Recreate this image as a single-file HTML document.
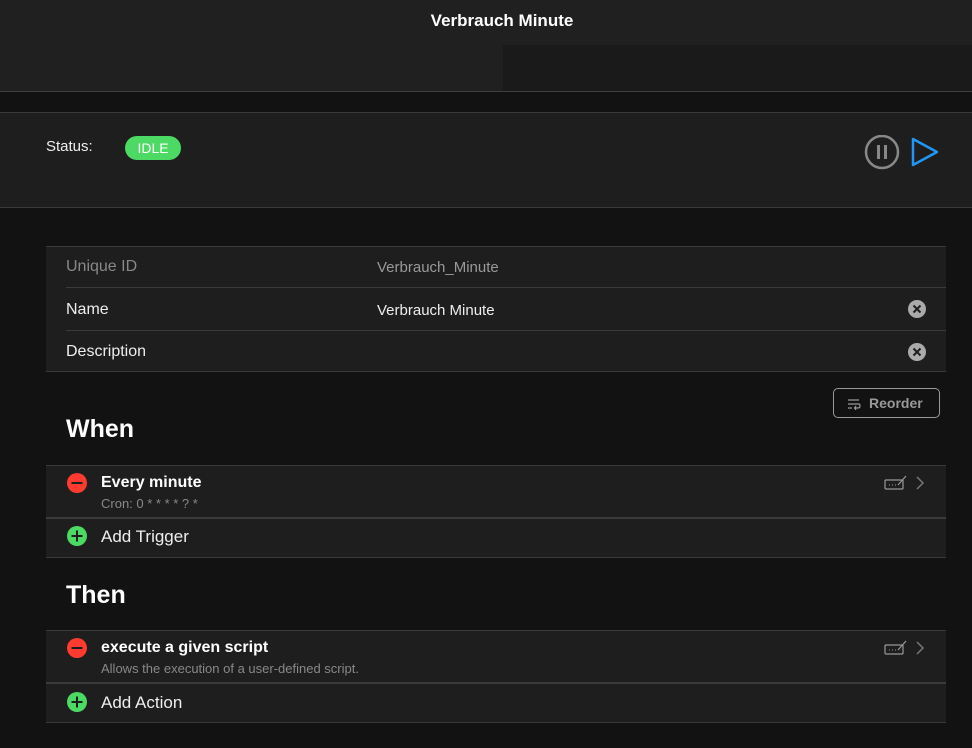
<!DOCTYPE html>
<html><head><style>
*{margin:0;padding:0;box-sizing:border-box}
body{width:972px;height:748px;background:#121212;font-family:"Liberation Sans",sans-serif;color:#fff;position:relative;overflow:hidden}
.a{position:absolute}
.sep{position:absolute;height:1px;background:#3a3a3a}
.t{position:absolute;font-size:16px;white-space:nowrap}
</style></head><body>
<div class="a" style="left:0;top:0;width:972px;height:92px;background:#202020"></div>
<div class="a" style="left:503px;top:45px;width:469px;height:47px;background:#1a1a1a"></div>
<div class="sep" style="left:0;top:91px;width:972px;background:#3f3f3f"></div>
<div class="t" style="left:0;width:1004px;text-align:center;top:11px;font-weight:bold;font-size:17px">Verbrauch Minute</div>

<div class="a" style="left:0;top:112px;width:972px;height:96px;background:#1e1e1e;border-top:1px solid #3a3a3a;border-bottom:1px solid #3a3a3a"></div>
<div class="t" style="left:46px;top:138px;font-size:15px;color:#eee">Status:</div>
<div class="a" style="left:125px;top:136px;width:56px;height:24px;border-radius:12px;background:#4cd964;color:#fff;font-size:14px;text-align:center;line-height:24px">IDLE</div>
<svg class="a" style="left:864px;top:135px" width="36" height="36"><circle cx="18" cy="17" r="16" fill="none" stroke="#888" stroke-width="2.5"/><rect x="13" y="10" width="3" height="14" fill="#888"/><rect x="20" y="10" width="3" height="14" fill="#888"/></svg>
<svg class="a" style="left:910px;top:136px" width="32" height="32"><path d="M3 3 L27 16 L3 29 Z" fill="none" stroke="#2196f3" stroke-width="2.5" stroke-linejoin="round"/></svg>

<div class="a" style="left:46px;top:246px;width:900px;height:126px;background:#1e1e1e;border-top:1px solid #3a3a3a;border-bottom:1px solid #3a3a3a"></div>
<div class="sep" style="left:66px;top:287px;width:880px"></div>
<div class="sep" style="left:66px;top:330px;width:880px"></div>
<div class="t" style="left:66px;top:258px;color:#888">Unique ID</div>
<div class="t" style="left:377px;top:259px;color:#999;font-size:15px">Verbrauch_Minute</div>
<div class="t" style="left:66px;top:301px;color:#eee">Name</div>
<div class="t" style="left:377px;top:302px;color:#eee;font-size:15px">Verbrauch Minute</div>
<div class="t" style="left:66px;top:343px;color:#eee">Description</div>
<svg class="a" style="left:908px;top:300px" width="18" height="18"><circle cx="9" cy="9" r="9" fill="#aaa"/><path d="M5.5 5.5L12.5 12.5M12.5 5.5L5.5 12.5" stroke="#1e1e1e" stroke-width="2"/></svg>
<svg class="a" style="left:908px;top:343px" width="18" height="18"><circle cx="9" cy="9" r="9" fill="#aaa"/><path d="M5.5 5.5L12.5 12.5M12.5 5.5L5.5 12.5" stroke="#1e1e1e" stroke-width="2"/></svg>

<div class="a" style="left:833px;top:388px;width:107px;height:30px;border:1px solid #999;border-radius:5px"></div>
<svg class="a" style="left:847px;top:398px" width="14" height="12"><path d="M1 2H12M1 6H12Q13 6 13 8Q13 10 11 10H8M9 8L7.5 10L9 12M1 10H5" stroke="#999" stroke-width="1.2" fill="none"/></svg>
<div class="t" style="left:869px;top:395px;color:#999;font-weight:bold;font-size:14px">Reorder</div>

<div class="t" style="left:66px;top:415px;font-size:25px;font-weight:bold">When</div>
<div class="a" style="left:46px;top:465px;width:900px;height:93px;background:#1e1e1e;border-top:1px solid #3a3a3a;border-bottom:1px solid #3a3a3a"></div>
<div class="a" style="left:46px;top:517px;width:900px;height:2px;background:#3a3a3a"></div>
<svg class="a" style="left:67px;top:473px" width="20" height="20"><circle cx="10" cy="10" r="10" fill="#ff3b30"/><rect x="4.5" y="9" width="11" height="2" fill="#1e1e1e"/></svg>
<div class="t" style="left:101px;top:474px;font-weight:bold">Every minute</div>
<div class="t" style="left:101px;top:496px;font-size:13px;color:#888">Cron: 0 * * * * ? *</div>
<svg class="a" style="left:884px;top:474px" width="24" height="16"><rect x="1" y="6" width="18" height="9" rx="1" fill="none" stroke="#999" stroke-width="1.2"/><path d="M5 11h1M8 11h1M11 11h1" stroke="#999"/><path d="M14 11L22 2" stroke="#999" stroke-width="1.2"/></svg>
<svg class="a" style="left:915px;top:475px" width="10" height="16"><path d="M2 2L8 8L2 14" stroke="#777" stroke-width="1.5" fill="none"/></svg>
<svg class="a" style="left:67px;top:526px" width="20" height="20"><circle cx="10" cy="10" r="10" fill="#4cd964"/><path d="M4.5 10H15.5M10 4.5V15.5" stroke="#1e1e1e" stroke-width="2"/></svg>
<div class="t" style="left:101px;top:527px;font-size:17px;color:#eee">Add Trigger</div>

<div class="t" style="left:66px;top:581px;font-size:25px;font-weight:bold">Then</div>
<div class="a" style="left:46px;top:630px;width:900px;height:93px;background:#1e1e1e;border-top:1px solid #3a3a3a;border-bottom:1px solid #3a3a3a"></div>
<div class="a" style="left:46px;top:682px;width:900px;height:2px;background:#3a3a3a"></div>
<svg class="a" style="left:67px;top:638px" width="20" height="20"><circle cx="10" cy="10" r="10" fill="#ff3b30"/><rect x="4.5" y="9" width="11" height="2" fill="#1e1e1e"/></svg>
<div class="t" style="left:101px;top:639px;font-weight:bold">execute a given script</div>
<div class="t" style="left:101px;top:661px;font-size:13px;color:#888">Allows the execution of a user-defined script.</div>
<svg class="a" style="left:884px;top:639px" width="24" height="16"><rect x="1" y="6" width="18" height="9" rx="1" fill="none" stroke="#999" stroke-width="1.2"/><path d="M5 11h1M8 11h1M11 11h1" stroke="#999"/><path d="M14 11L22 2" stroke="#999" stroke-width="1.2"/></svg>
<svg class="a" style="left:915px;top:640px" width="10" height="16"><path d="M2 2L8 8L2 14" stroke="#777" stroke-width="1.5" fill="none"/></svg>
<svg class="a" style="left:67px;top:692px" width="20" height="20"><circle cx="10" cy="10" r="10" fill="#4cd964"/><path d="M4.5 10H15.5M10 4.5V15.5" stroke="#1e1e1e" stroke-width="2"/></svg>
<div class="t" style="left:101px;top:693px;font-size:17px;color:#eee">Add Action</div>
</body></html>
